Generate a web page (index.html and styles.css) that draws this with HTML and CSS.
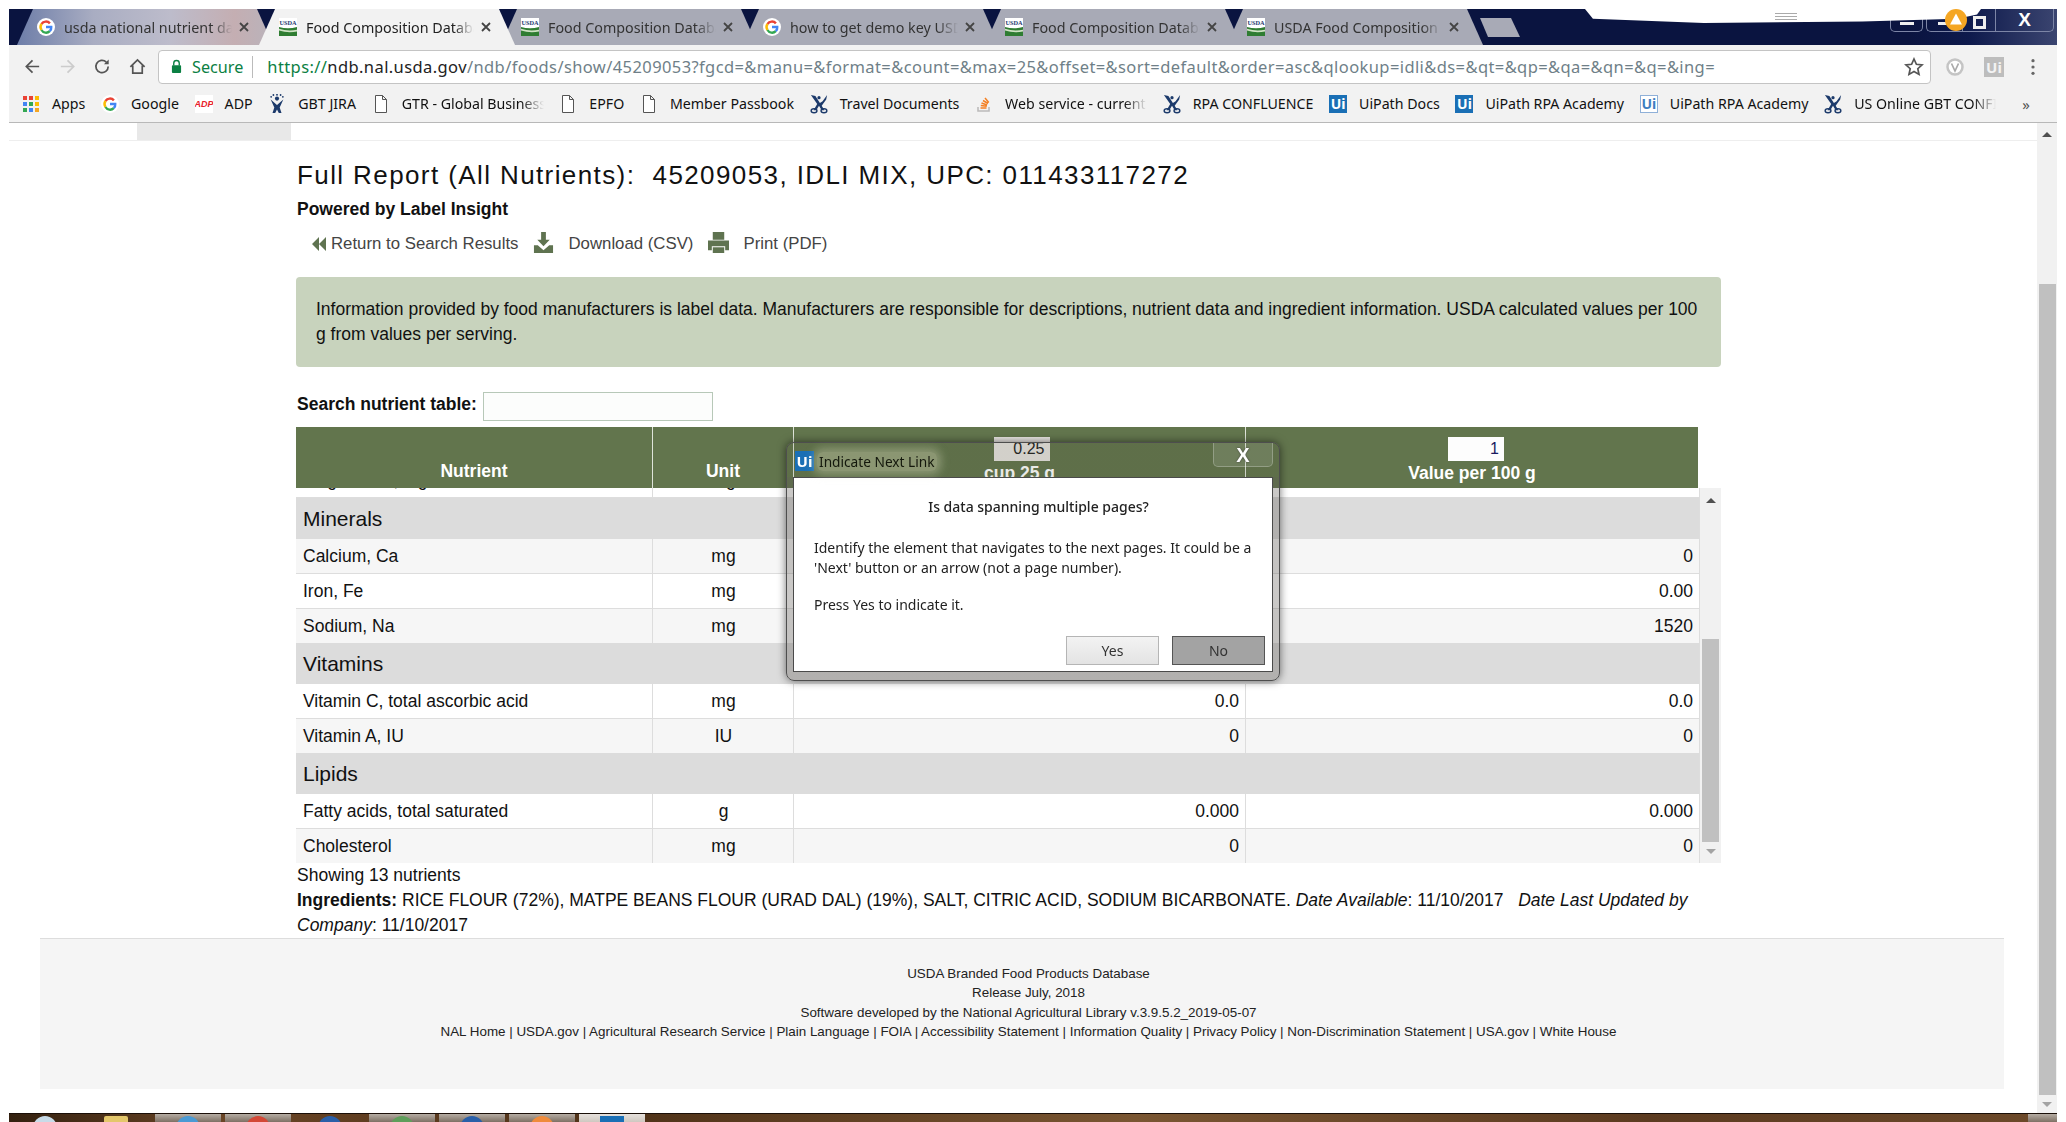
FILE: index.html
```html
<!DOCTYPE html>
<html lang="en">
  <head>
    <meta charset="UTF-8" />
    <title>Food Composition Databases</title>
    <link rel="stylesheet" href="styles.css">
  </head>
  <body>
    <svg class="defs">
      <symbol id="i-google" viewBox="0 0 24 24">
        <circle cx="12" cy="12" r="12" fill="#fff"/>
        <path d="M17.2 7.2A7 7 0 0 0 6 8" fill="none" stroke="#ea4335" stroke-width="3.2"/>
        <path d="M6 8a7 7 0 0 0 0 8" fill="none" stroke="#fbbc05" stroke-width="3.2"/>
        <path d="M6 16a7 7 0 0 0 11 1.6" fill="none" stroke="#34a853" stroke-width="3.2"/>
        <path d="M17 17.6A7 7 0 0 0 19 12h-7" fill="none" stroke="#4285f4" stroke-width="3.2"/>
      </symbol>
      <symbol id="i-usda" viewBox="0 0 20 20">
        <rect width="20" height="20" fill="#fff"/>
        <text x="10" y="7.5" font-size="7" font-weight="700" text-anchor="middle" fill="#1d3a70" font-family="Liberation Serif, serif">USDA</text>
        <path d="M0 10q10 3 20 0v10H0z" fill="#2f7d32"/>
        <path d="M0 12q10 3 20 1v2q-10 2-20-1z" fill="#cfe3c4"/>
      </symbol>
      <symbol id="i-close" viewBox="0 0 12 12">
        <path d="M2 2l8 8M10 2l-8 8" stroke="#444" stroke-width="1.8" fill="none"/>
      </symbol>
      <symbol id="i-doc" viewBox="0 0 18 20">
        <path d="M3.500 1.500h7l4 4v13h-11zM10.500 1.500v4h4" fill="#fff" stroke="#555" stroke-width="1"/>
      </symbol>
      <symbol id="i-scissor" viewBox="0 0 20 22">
        <path d="M1 1l5 1 5 8 3-2 5-7-1 5-5 7 3 5-3 0-3-5-3 5-3 0 4-7z" fill="#1c3a6b"/>
        <circle cx="10" cy="4" r="1.800" fill="#1c3a6b"/>
        <ellipse cx="4.500" cy="18.500" rx="3.200" ry="2.200" fill="none" stroke="#1c3a6b" stroke-width="1.600"/>
        <ellipse cx="15.500" cy="18.500" rx="3.200" ry="2.200" fill="none" stroke="#1c3a6b" stroke-width="1.600"/>
      </symbol>
      <symbol id="i-jira" viewBox="0 0 20 22">
        <circle cx="10" cy="5" r="2.300" fill="#1c3a6b"/>
        <circle cx="3.500" cy="3" r="1" fill="#1c3a6b"/>
        <circle cx="6" cy="1" r="1" fill="#1c3a6b"/>
        <circle cx="10" cy="0.800" r="1" fill="#1c3a6b"/>
        <circle cx="14" cy="1" r="1" fill="#1c3a6b"/>
        <circle cx="16.500" cy="3" r="1" fill="#1c3a6b"/>
        <path d="M3 6l7 6 7-6-4 9 2 6h-3l-2-4-2 4H5l2-6z" fill="#1c3a6b"/>
      </symbol>
    </svg>

    <div class="top-strip"></div>

    <div class="window">
      <div class="tabbar">
        <div class="tabs">
          <div class="tab tab-first">
            <svg class="fav"><use href="#i-google"/></svg>
            <span class="tab-title">usda national nutrient database</span>
            <svg class="tab-x"><use href="#i-close"/></svg>
          </div>
          <div class="tab tab-active">
            <svg class="fav"><use href="#i-usda"/></svg>
            <span class="tab-title">Food Composition Databases</span>
            <svg class="tab-x"><use href="#i-close"/></svg>
          </div>
          <div class="tab">
            <svg class="fav"><use href="#i-usda"/></svg>
            <span class="tab-title">Food Composition Databases</span>
            <svg class="tab-x"><use href="#i-close"/></svg>
          </div>
          <div class="tab">
            <svg class="fav"><use href="#i-google"/></svg>
            <span class="tab-title">how to get demo key USDA</span>
            <svg class="tab-x"><use href="#i-close"/></svg>
          </div>
          <div class="tab">
            <svg class="fav"><use href="#i-usda"/></svg>
            <span class="tab-title">Food Composition Databases</span>
            <svg class="tab-x"><use href="#i-close"/></svg>
          </div>
          <div class="tab">
            <svg class="fav"><use href="#i-usda"/></svg>
            <span class="tab-title">USDA Food Composition Databases</span>
            <svg class="tab-x"><use href="#i-close"/></svg>
          </div>
          <div class="new-tab"></div>
        </div>
        <div class="win-controls">
          <div class="win-btn win-extra"><span class="dash"></span></div>
          <div class="win-btn win-min"><span class="dash"></span></div>
          <div class="win-btn win-max"><span class="restore"></span></div>
          <div class="win-btn win-close">X</div>
        </div>
        <div class="tray-blob"><span class="blob-handle"></span></div>
        <svg class="alert-dot" viewBox="0 0 24 24">
          <circle cx="12" cy="12" r="12" fill="#f5a623"/>
          <path d="M12 5l6.500 12h-13z" fill="#fff"/>
        </svg>
      </div>

      <div class="toolbar">
        <svg class="tool" viewBox="0 0 20 20"><path d="M17 10H4M10 3.500L3.500 10l6.500 6.500" fill="none" stroke="#555" stroke-width="1.800"/></svg>
        <svg class="tool" viewBox="0 0 20 20"><path d="M3 10h13M10 3.500l6.500 6.500-6.500 6.500" fill="none" stroke="#ccc" stroke-width="1.800"/></svg>
        <svg class="tool" viewBox="0 0 20 20"><path d="M16 10a6.500 6.500 0 1 1-2-4.700" fill="none" stroke="#555" stroke-width="1.800"/><path d="M16.500 2.500v5h-5z" fill="#555"/></svg>
        <svg class="tool" viewBox="0 0 20 20"><path d="M2.500 10.500L10 3l7.500 7.500M5 9v8h10V9" fill="none" stroke="#555" stroke-width="1.800"/></svg>
        <div class="omnibox">
          <svg class="lock" viewBox="0 0 12 16"><path d="M3 7V4.500a3 3 0 0 1 6 0V7" fill="none" stroke="#0b8043" stroke-width="1.500"/><rect x="1" y="6.500" width="10" height="8.500" rx="1" fill="#0b8043"/></svg>
          <span class="secure">Secure</span>
          <span class="omni-sep"></span>
          <span class="url"><span class="url-scheme">https://</span><span class="url-host">ndb.nal.usda.gov</span>/ndb/foods/show/45209053?fgcd=&amp;manu=&amp;format=&amp;count=&amp;max=25&amp;offset=&amp;sort=default&amp;order=asc&amp;qlookup=idli&amp;ds=&amp;qt=&amp;qp=&amp;qa=&amp;qn=&amp;q=&amp;ing=</span>
          <svg class="star" viewBox="0 0 20 20"><path d="M10 2l2.400 5.300 5.700.6-4.300 3.800 1.200 5.700L10 14.500l-5 2.900 1.200-5.700L1.900 7.900l5.700-.6z" fill="none" stroke="#555" stroke-width="1.700"/></svg>
        </div>
        <svg class="ext-v" viewBox="0 0 20 20"><circle cx="10" cy="10" r="7.500" fill="#fff" stroke="#c4c4c4" stroke-width="2.500"/><path d="M6.500 6.500L10 14l3.500-7.500" fill="none" stroke="#aaa" stroke-width="1.700"/></svg>
        <span class="ext-ui">Ui</span>
        <svg class="menu-dots" viewBox="0 0 6 20"><circle cx="3" cy="3" r="1.800" fill="#666"/><circle cx="3" cy="10" r="1.800" fill="#666"/><circle cx="3" cy="17" r="1.800" fill="#666"/></svg>
      </div>

      <div class="bookmarks">
        <div class="bm">
          <svg class="bm-icon" viewBox="0 0 18 18">
            <rect x="1" y="1" width="4" height="4" fill="#ea4335"/><rect x="7" y="1" width="4" height="4" fill="#ea4335"/><rect x="13" y="1" width="4" height="4" fill="#fbbc05"/>
            <rect x="1" y="7" width="4" height="4" fill="#4285f4"/><rect x="7" y="7" width="4" height="4" fill="#34a853"/><rect x="13" y="7" width="4" height="4" fill="#fbbc05"/>
            <rect x="1" y="13" width="4" height="4" fill="#34a853"/><rect x="7" y="13" width="4" height="4" fill="#4285f4"/><rect x="13" y="13" width="4" height="4" fill="#f5a623"/>
          </svg>
          <span>Apps</span>
        </div>
        <div class="bm"><svg class="bm-icon"><use href="#i-google"/></svg><span>Google</span></div>
        <div class="bm">
          <svg class="bm-icon" viewBox="0 0 20 20"><rect width="20" height="20" fill="#fff"/><text x="10" y="13.500" font-size="10" font-weight="700" font-style="italic" text-anchor="middle" fill="#e8202a" font-family="Liberation Sans, sans-serif">ADP</text></svg>
          <span>ADP</span>
        </div>
        <div class="bm"><svg class="bm-icon"><use href="#i-jira"/></svg><span>GBT JIRA</span></div>
        <div class="bm"><svg class="bm-icon"><use href="#i-doc"/></svg><span class="bm-cut">GTR - Global Business Travel</span></div>
        <div class="bm"><svg class="bm-icon"><use href="#i-doc"/></svg><span>EPFO</span></div>
        <div class="bm"><svg class="bm-icon"><use href="#i-doc"/></svg><span>Member Passbook</span></div>
        <div class="bm"><svg class="bm-icon"><use href="#i-scissor"/></svg><span>Travel Documents</span></div>
        <div class="bm">
          <svg class="bm-icon" viewBox="0 0 18 18"><path d="M3 12v4h11v-4" fill="none" stroke="#bcbbbb" stroke-width="1.600"/><path d="M5.500 13h6M5.800 10.500l6 .8M6.500 8l5.600 2M8 5.500l5 3M10 3l3.800 4.500" fill="none" stroke="#f48024" stroke-width="1.500"/></svg>
          <span class="bm-cut">Web service - current status</span>
        </div>
        <div class="bm"><svg class="bm-icon"><use href="#i-scissor"/></svg><span>RPA CONFLUENCE</span></div>
        <div class="bm"><span class="ui-badge">Ui</span><span>UiPath Docs</span></div>
        <div class="bm"><span class="ui-badge">Ui</span><span>UiPath RPA Academy</span></div>
        <div class="bm"><span class="ui-badge ui-outline">Ui</span><span>UiPath RPA Academy</span></div>
        <div class="bm"><svg class="bm-icon"><use href="#i-scissor"/></svg><span class="bm-cut">US Online GBT CONFIG</span></div>
        <div class="bm-more">»</div>
      </div>

      <div class="page">
        <div class="page-main">
          <div class="page-strip"><div class="strip-tab"></div></div>

          <div class="content">
            <h1>Full Report (All Nutrients):&nbsp; 45209053, IDLI MIX, UPC: 011433117272</h1>
            <div class="powered">Powered by Label Insight</div>
            <div class="report-links">
              <span class="report-link">
                <svg class="rl-back" viewBox="0 0 15 14"><path d="M8 0v14L1 7zM15 0v14L8 7z" fill="#5f7350"/></svg>
                Return to Search Results
              </span>
              <span class="report-link">
                <svg class="rl-icon" viewBox="0 0 20 22"><path d="M7.500 0h5v8h4l-6.500 7-6.500-7h4z" fill="#5f7350"/><path d="M0 14h4l6 5 6-5h4v8H0z" fill="#5f7350"/></svg>
                Download (CSV)
              </span>
              <span class="report-link">
                <svg class="rl-icon" viewBox="0 0 22 22"><path d="M5 0h12v8H5zM0 9h22v10h-4v-4H4v4H0z" fill="#5f7350"/><path d="M5 16h12v6H5z" fill="#5f7350"/></svg>
                Print (PDF)
              </span>
            </div>

            <div class="note">Information provided by food manufacturers is label data. Manufacturers are responsible for descriptions, nutrient data and ingredient information. USDA calculated values per 100 g from values per serving.</div>

            <div class="search-row">
              <label for="nutrient_search">Search nutrient table:</label>
              <input type="text" id="nutrient_search" />
            </div>

            <div class="tbl-head">
              <div class="th">Nutrient</div>
              <div class="th">Unit</div>
              <div class="th th-input">
                <input class="qty qty-dim" type="text" value="0.25" />
                <span>cup 25 g</span>
              </div>
              <div class="th th-input th-last">
                <input class="qty" type="text" value="1" />
                <span>Value per 100 g</span>
              </div>
            </div>

            <div class="tbl-scroll">
              <div class="tbl-body">
                <div class="row row-clipped"><div>Magnesium, Mg</div><div class="unit">mg</div><div class="num"></div><div class="num"></div></div>
                <div class="section">Minerals</div>
                <div class="row row-alt"><div>Calcium, Ca</div><div class="unit">mg</div><div class="num">0</div><div class="num">0</div></div>
                <div class="row"><div>Iron, Fe</div><div class="unit">mg</div><div class="num">0.00</div><div class="num">0.00</div></div>
                <div class="row row-alt row-end"><div>Sodium, Na</div><div class="unit">mg</div><div class="num">380</div><div class="num">1520</div></div>
                <div class="section">Vitamins</div>
                <div class="row"><div>Vitamin C, total ascorbic acid</div><div class="unit">mg</div><div class="num">0.0</div><div class="num">0.0</div></div>
                <div class="row row-alt row-end"><div>Vitamin A, IU</div><div class="unit">IU</div><div class="num">0</div><div class="num">0</div></div>
                <div class="section">Lipids</div>
                <div class="row"><div>Fatty acids, total saturated</div><div class="unit">g</div><div class="num">0.000</div><div class="num">0.000</div></div>
                <div class="row row-alt row-end"><div>Cholesterol</div><div class="unit">mg</div><div class="num">0</div><div class="num">0</div></div>
              </div>
              <div class="scrollbar tbl-bar">
                <span class="arrow-up"></span>
                <span class="thumb"></span>
                <span class="arrow-down"></span>
              </div>
            </div>

            <div class="showing">Showing 13 nutrients</div>
            <div class="ingredients"><b>Ingredients:</b> RICE FLOUR (72%), MATPE BEANS FLOUR (URAD DAL) (19%), SALT, CITRIC ACID, SODIUM BICARBONATE. <i>Date Available</i>: 11/10/2017 &nbsp; <i>Date Last Updated by Company</i>: 11/10/2017</div>
          </div>

          <div class="footer">
            <div>USDA Branded Food Products Database</div>
            <div>Release July, 2018</div>
            <div>Software developed by the National Agricultural Library v.3.9.5.2_2019-05-07</div>
            <div>NAL Home | USDA.gov | Agricultural Research Service | Plain Language | FOIA | Accessibility Statement | Information Quality | Privacy Policy | Non-Discrimination Statement | USA.gov | White House</div>
          </div>
        </div>

        <div class="scrollbar page-bar">
          <span class="arrow-up"></span>
          <span class="thumb"></span>
          <span class="arrow-down"></span>
        </div>
      </div>

      <div class="taskbar">
        <div class="task task-start"><span class="orb orb-start"></span></div>
        <div class="task task-plain"><span class="orb orb-folder"></span></div>
        <div class="task"><span class="orb orb-ie"></span></div>
        <div class="task"><span class="orb orb-chrome"></span></div>
        <div class="task task-plain"><span class="orb orb-blue"></span></div>
        <div class="task"><span class="orb orb-green"></span></div>
        <div class="task"><span class="orb orb-blue"></span></div>
        <div class="task"><span class="orb orb-orange"></span></div>
        <div class="task task-on"><span class="orb orb-square"></span></div>
        <div class="task task-desktop"></div>
      </div>
    </div>

    <div class="dialog">
      <div class="dialog-title">
        <span class="ui-badge dialog-badge">Ui</span>
        <span class="dialog-name">Indicate Next Link</span>
        <span class="dialog-close">X</span>
      </div>
      <div class="dialog-panel">
        <div class="dialog-q">Is data spanning multiple pages?</div>
        <p>Identify the element that navigates to the next pages. It could be a 'Next' button or an arrow (not a page number).</p>
        <p>Press Yes to indicate it.</p>
        <div class="dialog-btns">
          <button class="btn-yes">Yes</button>
          <button class="btn-no">No</button>
        </div>
      </div>
    </div>
  </body>
</html>
```

FILE: styles.css
```css
html, body {
  margin: 0;
  height: 1122px;
  overflow: hidden;
  background: #fff;
}
body {
  font-family: "Liberation Sans", Arial, sans-serif;
  color: #111;
}
.defs {
  display: block;
  width: 0;
  height: 0;
}
.top-strip {
  height: 9px;
}
.window {
  margin-left: 9px;
  width: 2048px;
}

/* browser tabs */
.tabbar {
  position: relative;
  display: flex;
  height: 36px;
  background: linear-gradient(90deg, #0a1440 0, #0a1440 1900px, #0e1a4c 1960px, #3b4570 100%);
  font-family: "Noto Sans", sans-serif;
}
.tabs {
  display: flex;
  padding-left: 8px;
}
.tab {
  position: relative;
  display: flex;
  align-items: center;
  flex: none;
  width: 256px;
  height: 36px;
  margin-right: -14px;
  box-sizing: border-box;
  padding-left: 20px;
  background: #a8aab6;
  clip-path: polygon(16px 0, 240px 0, 256px 100%, 0 100%);
  font-size: 14.300px;
  color: #333;
}
.tab-first {
  background: linear-gradient(90deg, #6d7da8 0, #a9adc2 30%, #bdbccb 60%, #c4aeb2 85%, #b9b3bb 100%);
}
.tab-active {
  z-index: 2;
  background: #f2f2f2;
  color: #222;
}
.fav {
  flex: none;
  width: 18px;
  height: 18px;
}
.tab-title {
  width: 168px;
  margin-left: 9px;
  overflow: hidden;
  white-space: nowrap;
  -webkit-mask-image: linear-gradient(90deg, #000 88%, transparent 100%);
  mask-image: linear-gradient(90deg, #000 88%, transparent 100%);
}
.tab-x {
  flex: none;
  width: 12px;
  height: 12px;
  margin-left: 6px;
}
.new-tab {
  flex: none;
  width: 40px;
  height: 19px;
  margin: 9px 0 0 11px;
  background: #a8aab6;
  clip-path: polygon(0 0, 31px 0, 100% 100%, 8px 100%);
}
.win-controls {
  display: flex;
  margin-left: auto;
  margin-right: 3px;
  height: 23px;
}
.win-btn {
  display: flex;
  align-items: center;
  justify-content: center;
  box-sizing: border-box;
  border: 1px solid #7c85a6;
  border-top: 0;
  color: #fff;
}
.win-extra {
  width: 33px;
  margin-right: 3px;
  border-radius: 0 0 5px 5px;
}
.win-min {
  width: 36px;
  border-right: 0;
  border-radius: 0 0 0 5px;
}
.win-max {
  width: 33px;
  border-right: 0;
}
.win-close {
  width: 59px;
  border-radius: 0 0 5px 0;
  font: bold 19px "Liberation Sans", sans-serif;
}
.dash {
  display: block;
  width: 14px;
  height: 3px;
  background: #eee;
  margin-top: 6px;
}
.restore {
  display: block;
  width: 7px;
  height: 7px;
  border: 3px solid #eee;
  margin-top: 4px;
}
.tray-blob {
  position: absolute;
  left: 1576px;
  top: 0;
  width: 396px;
  height: 14px;
  background: #fff;
  clip-path: polygon(0 0, 100% 0, 99% 40%, 94% 70%, 70% 90%, 30% 100%, 2% 70%);
}
.blob-handle {
  display: block;
  width: 22px;
  height: 5px;
  margin: 4px 0 0 190px;
  border-top: 1px solid #aaa;
  border-bottom: 1px solid #aaa;
  background: linear-gradient(#fff 40%, #aaa 40%, #aaa 60%, #fff 60%);
}
.alert-dot {
  position: absolute;
  left: 1936px;
  top: 0;
  width: 22px;
  height: 22px;
}

/* toolbar */
.toolbar {
  display: flex;
  align-items: center;
  height: 43px;
  padding-left: 14px;
  background: #f2f2f2;
  font-family: "Noto Sans", sans-serif;
}
.tool {
  flex: none;
  width: 19px;
  height: 19px;
  margin-right: 16px;
}
.omnibox {
  display: flex;
  align-items: center;
  flex: none;
  width: 1773px;
  height: 34px;
  margin-left: -5px;
  box-sizing: border-box;
  padding-left: 12px;
  background: #fff;
  border: 1px solid #c4c4c4;
  border-radius: 4px;
}
.lock {
  width: 11px;
  height: 15px;
  flex: none;
}
.secure {
  margin-left: 10px;
  font-size: 16.200px;
  color: #0b8043;
}
.omni-sep {
  width: 1px;
  height: 22px;
  margin: 0 14px 0 9px;
  background: #bbb;
}
.url {
  font-size: 16.500px;
  letter-spacing: 0.400px;
  color: #6f7f88;
  white-space: nowrap;
}
.url-scheme {
  color: #0b8043;
}
.url-host {
  color: #222;
}
.star {
  width: 20px;
  height: 20px;
  flex: none;
  margin-left: auto;
  margin-right: 6px;
}
.ext-v {
  flex: none;
  width: 20px;
  height: 20px;
  margin-left: 14px;
}
.ext-ui {
  flex: none;
  width: 20px;
  height: 20px;
  margin-left: 19px;
  background: #bdbdbd;
  color: #f3f3f3;
  font: bold 15px/20px "Noto Sans", sans-serif;
  text-align: center;
}
.menu-dots {
  flex: none;
  width: 6px;
  height: 18px;
  margin-left: 26px;
}

/* bookmarks */
.bookmarks {
  display: flex;
  align-items: center;
  height: 35px;
  box-sizing: border-box;
  padding: 0 0 3px 13px;
  background: #f2f2f2;
  border-bottom: 1px solid #b8b8b8;
  font: 14.200px "Noto Sans", sans-serif;
  color: #111;
  white-space: nowrap;
}
.bm {
  display: flex;
  align-items: center;
  flex: none;
  gap: 12px;
  margin-right: 15.700px;
}
.bm-icon {
  flex: none;
  width: 18px;
  height: 20px;
}
.bm-cut {
  display: block;
  width: 142px;
  overflow: hidden;
  -webkit-mask-image: linear-gradient(90deg, #000 84%, transparent 100%);
  mask-image: linear-gradient(90deg, #000 84%, transparent 100%);
}
.ui-badge {
  flex: none;
  width: 18px;
  height: 18px;
  background: #1a6fb5;
  color: #fff;
  font: bold 14px/18px "Noto Sans", sans-serif;
  text-align: center;
}
.ui-outline {
  background: #fff;
  color: #3f7ec0;
  box-sizing: border-box;
  border: 1px solid #8fb0d8;
  line-height: 16px;
}
.bm-more {
  margin: 0 27px 0 auto;
  font-size: 15px;
  color: #555;
}

/* page */
.page {
  display: flex;
  height: 990px;
  background: #fff;
}
.page-main {
  flex: none;
  width: 2028px;
}
.page-strip {
  height: 17px;
  border-bottom: 1px solid #eee;
}
.strip-tab {
  width: 154px;
  height: 17px;
  margin-left: 128px;
  background: #e8e8e8;
}
.content {
  width: 1425px;
  margin-left: 287px;
}
h1 {
  margin: 16px 0 4px 1px;
  font-size: 26px;
  font-weight: 400;
  line-height: 36px;
  letter-spacing: 1.400px;
  color: #111;
}
.powered {
  margin-left: 1px;
  font-size: 17.500px;
  font-weight: 700;
  line-height: 24px;
}
.report-links {
  display: flex;
  align-items: center;
  height: 24px;
  margin: 11px 0 21px 15px;
  font-size: 16.800px;
  color: #444;
}
.report-link {
  display: flex;
  align-items: center;
  margin-right: 15px;
  gap: 14px;
}
.report-link:first-child {
  gap: 5px;
}
.rl-back {
  width: 15px;
  height: 14px;
}
.rl-icon {
  width: 21px;
  height: 21px;
  margin-top: -4px;
}
.note {
  padding: 20px 16px 20px 20px;
  background: #c8d3bd;
  border-radius: 4px;
  font-size: 17.500px;
  line-height: 25px;
}
.search-row {
  display: flex;
  align-items: center;
  height: 29px;
  margin: 25px 0 6px 1px;
}
.search-row label {
  padding-bottom: 4px;
  font-size: 17.500px;
  font-weight: 700;
  margin-right: 6px;
}
.search-row input {
  width: 230px;
  height: 29px;
  box-sizing: border-box;
  background: #fcfdfc;
  border: 1px solid #b7c8b8;
}

/* nutrient table */
.tbl-head, .row {
  display: grid;
  grid-template-columns: 357px 141px 452px 1fr;
}
.tbl-head {
  width: 1402px;
  height: 61px;
  background: #62754d;
  color: #fff;
  font-size: 17.500px;
  font-weight: 700;
}
.th {
  display: flex;
  flex-direction: column;
  align-items: center;
  justify-content: flex-end;
  padding-bottom: 7px;
  border-right: 1px solid #dfe4da;
  line-height: 20px;
}
.th-input {
  padding-bottom: 5px;
}
.th-last {
  border-right: 0;
}
.qty {
  width: 56px;
  height: 24px;
  box-sizing: border-box;
  margin: 0 0 2px 8px;
  padding: 0 5px;
  border: 0;
  background: #fdfdfd;
  font: 16px "Liberation Sans", sans-serif;
  color: #1a1a60;
  text-align: right;
}
.qty-dim {
  margin-left: 4px;
  background: #e6e3e0;
  color: #222;
}
.tbl-scroll {
  display: flex;
  height: 375px;
  overflow: hidden;
}
.tbl-body {
  flex: none;
  width: 1403px;
}
.row {
  height: 35px;
  box-sizing: border-box;
  border-bottom: 1px solid #ddd;
  background: #fff;
  font-size: 17.500px;
  line-height: 34px;
}
.row > div {
  padding: 0 6px 0 7px;
  border-right: 1px solid #ddd;
}
.row > div:last-child {
  border-right: 0;
}
.row-clipped {
  margin-top: -25px;
}
.row-alt {
  background: #f6f6f6;
}
.row-end {
  height: 34px;
  border-bottom: 0;
}
.row > .unit {
  text-align: center;
}
.row > .num {
  text-align: right;
}
.section {
  height: 41px;
  padding-left: 7px;
  background: #dcdcdc;
  font-size: 21px;
  line-height: 41px;
}
.scrollbar {
  display: flex;
  flex-direction: column;
  align-items: center;
  box-sizing: border-box;
  background: #f1f1f1;
}
.arrow-up, .arrow-down {
  width: 0;
  height: 0;
  border-left: 5px solid transparent;
  border-right: 5px solid transparent;
}
.arrow-up {
  border-bottom: 5px solid #505050;
}
.arrow-down {
  border-top: 5px solid #a3a3a3;
}
.thumb {
  background: #c0c0c0;
}
.tbl-bar {
  flex: none;
  width: 22px;
  border-left: 1px solid #ddd;
  padding-top: 10px;
}
.tbl-bar .thumb {
  width: 17px;
  height: 203px;
  margin: 136px 0 7px;
}
.page-bar {
  flex: none;
  width: 20px;
  padding-top: 9px;
}
.page-bar .thumb {
  width: 17px;
  height: 811px;
  margin: 147px 0 7px;
}
.showing {
  margin-left: 1px;
  font-size: 17.500px;
  line-height: 24px;
}
.ingredients {
  margin: 1px 0 0 1px;
  font-size: 17.500px;
  line-height: 25px;
}
.footer {
  width: 1964px;
  height: 151px;
  box-sizing: border-box;
  margin-left: 31px;
  padding: 25px 0 0 13px;
  background: #f5f5f5;
  border-top: 1px solid #ddd;
  font-size: 13.400px;
  line-height: 19.400px;
  text-align: center;
  color: #222;
}

/* taskbar */
.taskbar {
  display: flex;
  height: 9px;
  overflow: hidden;
  box-sizing: border-box;
  border-top: 1px solid #1a0f08;
  background: linear-gradient(90deg, #33200f 0, #6a4526 10%, #4f3218 30%, #7a5632 55%, #5c3b20 80%, #6d4a2a 100%);
}
.task {
  display: flex;
  justify-content: center;
  flex: none;
  width: 66px;
  margin-right: 4px;
  background: linear-gradient(#b5aca3, #7e7064);
}
.task-start {
  width: 72px;
  margin-right: 0;
  background: none;
}
.task-plain {
  width: 70px;
  background: none;
}
.task-on {
  background: linear-gradient(#e6e1dc, #cfc8c0);
}
.task-desktop {
  width: 29px;
  margin: 0 0 0 auto;
}
.orb {
  display: block;
  width: 24px;
  height: 24px;
  border-radius: 50%;
  margin-top: 2px;
}
.orb-start { background: #c8dbe8; }
.orb-folder { background: #e4c76b; border-radius: 2px; }
.orb-ie { background: #4a9ad4; }
.orb-chrome { background: #d34836; }
.orb-blue { background: #2a5fa8; }
.orb-green { background: #5f9e5b; }
.orb-orange { background: #ef8b3c; }
.orb-square { background: #1a6fb5; border-radius: 0; }

/* UiPath dialog, sits over the table */
.dialog {
  position: fixed;
  left: 786px;
  top: 442px;
  width: 494px;
  height: 239px;
  box-sizing: border-box;
  border: 1px solid #4e4e4e;
  border-radius: 8px;
  background: linear-gradient(rgba(70, 75, 50, 0.12) 34px, rgba(90, 85, 80, 0.32) 34px);
  box-shadow: 0 0 9px rgba(0, 0, 0, 0.55);
  font-family: "Noto Sans", sans-serif;
}
.dialog-title {
  display: flex;
  align-items: center;
  height: 34px;
  padding-left: 8px;
}
.dialog-badge {
  width: 19px;
  height: 20px;
  font-size: 15px;
  line-height: 20px;
  margin-top: 2px;
}
.dialog-name {
  margin: 2px 0 0 3px;
  padding: 0 2px;
  font-size: 13.700px;
  color: #14180c;
  background: rgba(225, 225, 195, 0.34);
  box-shadow: 0 0 8px 4px rgba(225, 225, 195, 0.34);
  border-radius: 6px;
}
.dialog-close {
  align-self: flex-start;
  width: 60px;
  height: 24px;
  box-sizing: border-box;
  margin-left: auto;
  margin-right: 6px;
  border: 1px solid rgba(255, 255, 255, 0.25);
  border-top: 0;
  border-radius: 0 0 5px 5px;
  background: rgba(255, 255, 255, 0.1);
  color: #fff;
  font: bold 20px/24px "Liberation Sans", sans-serif;
  text-align: center;
  text-shadow: 0 0 2px #333;
}
.dialog-panel {
  height: 195px;
  margin: 0 6px;
  box-sizing: border-box;
  padding: 19px 20px 0;
  background: #fff;
  border: 1px solid #4a4a4a;
  font-size: 14px;
  color: #222;
}
.dialog-q {
  padding-left: 11px;
  text-align: center;
  font-weight: 500;
  line-height: 20px;
}
.dialog-panel p {
  margin: 21px 0 0;
  line-height: 20px;
}
.dialog-panel p + p {
  margin-top: 17px;
}
.dialog-btns {
  display: flex;
  justify-content: flex-end;
  gap: 13px;
  margin: 21px -13px 0 0;
}
.dialog-btns button {
  width: 93px;
  height: 29px;
  font: 14px "Noto Sans", sans-serif;
  color: #333;
}
.btn-yes {
  background: linear-gradient(#f3f3f3, #e3e3e3);
  border: 1px solid #b5b5b5;
}
.btn-no {
  background: #a3a3a3;
  border: 1px solid #555;
}
```
